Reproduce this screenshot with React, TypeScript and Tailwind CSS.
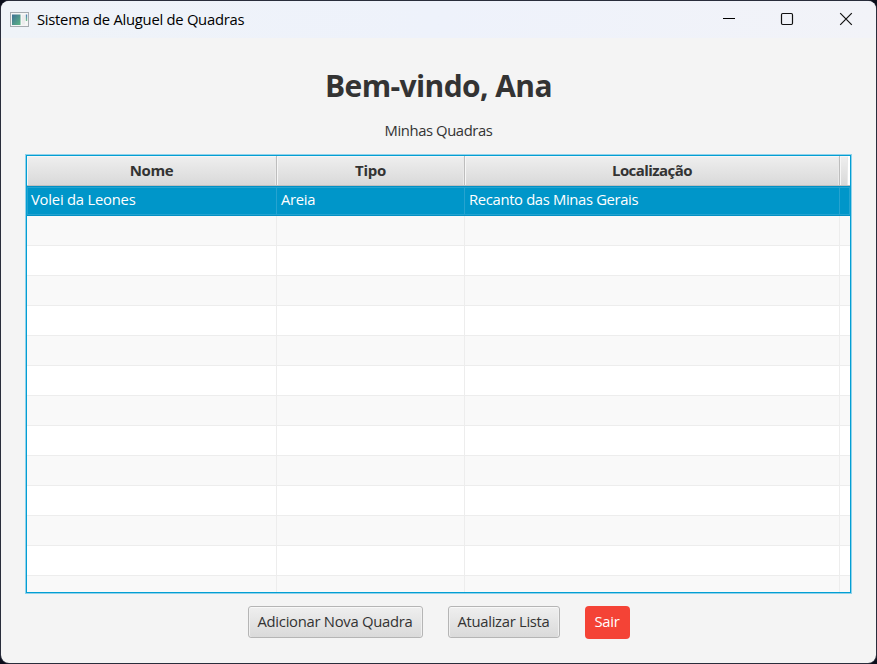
import React from "react";

const columns = [
  { title: "Nome", value: "Volei da Leones", width: "w-[250px]", head: "tracking-[-0.4px]", cell: "tracking-[-0.22px]" },
  { title: "Tipo", value: "Areia", width: "w-[188px]", head: "tracking-[-0.25px]", cell: "tracking-[-0.3px]" },
  { title: "Localização", value: "Recanto das Minas Gerais", width: "w-[375px]", head: "tracking-[-0.55px]", cell: "tracking-[-0.34px]" },
];

const emptyRows = Array.from({ length: 13 }, (_, i) => i);

function AppIcon() {
  return (
    <svg width="20" height="16" viewBox="0 0 20 16" className="shrink-0">
      <defs>
        <linearGradient id="pane" x1="0" y1="0" x2="1" y2="1">
          <stop offset="0" stopColor="#3f7095" />
          <stop offset="1" stopColor="#5cb584" />
        </linearGradient>
        <linearGradient id="side" x1="0" y1="0" x2="0" y2="1">
          <stop offset="0" stopColor="#4b78b8" />
          <stop offset="1" stopColor="#76c58d" />
        </linearGradient>
      </defs>
      <rect x="1.5" y="0.5" width="18" height="14" fill="#f5f6f6" stroke="#a6abb0" />
      <rect x="3" y="2.5" width="8.5" height="10.5" fill="url(#pane)" />
      <rect x="13" y="3" width="3" height="9.5" fill="#ececec" />
      <rect x="16.8" y="2.5" width="1.4" height="6.5" fill="url(#side)" />
    </svg>
  );
}

function TitleBar() {
  return (
    <header className="flex h-[37px] shrink-0 items-center bg-linear-to-r from-[#eff3f8] via-[#eef2fb] to-[#f2f3f8] pl-[8px]">
      <AppIcon />
      <h1 className="ml-[8px] text-[14.8px] tracking-[-0.27px] text-black">Sistema de Aluguel de Quadras</h1>
      <div className="mb-[2px] ml-auto flex items-center pr-[23px]">
        <svg width="12" height="14" viewBox="0 0 12 14" stroke="#000" fill="none">
          <path d="M0 6.5H12" />
        </svg>
        <svg width="14" height="14" viewBox="0 0 14 14" stroke="#111" strokeWidth="1.2" fill="none" className="ml-[45px]">
          <rect x="1.5" y="1.5" width="11" height="11" rx="1.2" />
        </svg>
        <svg width="14" height="14" viewBox="0 0 14 14" stroke="#111" strokeWidth="1.2" fill="none" className="ml-[45px]">
          <path d="M1.2 1.2L12.8 12.8M12.8 1.2L1.2 12.8" />
        </svg>
      </div>
    </header>
  );
}

function CourtTable() {
  return (
    <div className="h-[440px] w-[827px] shrink-0 border border-[#90d2ea]">
      <div className="h-full overflow-hidden border border-[#039ed3] bg-white">
        <div className="flex h-[30px] border-b border-[#c0c0c0] pr-[2px] font-bold">
          {columns.map((c) => (
            <div key={c.title} className={`${c.width} flex items-center justify-center border-r border-[#bdbdbd] bg-linear-to-b from-[#efefef] to-[#d9d9d9] text-[15px] shadow-[inset_1px_1px_0_#f6f6f6,inset_-1px_0_0_#e9e9e9] ${c.head}`}>
              {c.title}
            </div>
          ))}
          <div className="flex-1 bg-linear-to-b from-[#efefef] to-[#d9d9d9] shadow-[inset_1px_1px_0_#f6f6f6,inset_-1px_0_0_#e9e9e9]" />
        </div>
        <div className="flex h-[30px] border-y border-[#0391c5] bg-[#0096c9] text-white shadow-[inset_1px_1px_0_#24a3d0,inset_-1px_-1px_0_#24a3d0]">
          {columns.map((c) => (
            <div key={c.title} className={`${c.width} flex items-center border-r border-[#26a3d0] pb-[3px] pl-[4px] text-[14.8px] ${c.cell}`}>
              {c.value}
            </div>
          ))}
        </div>
        {emptyRows.map((i) => (
          <div key={i} className={i % 2 === 0 ? "flex h-[30px] border-b border-[#ededed] bg-[#f9f9f9]" : "flex h-[30px] border-b border-[#ededed] bg-white"}>
            {columns.map((c) => (
              <div key={c.title} className={`${c.width} border-r border-[#ededed]`} />
            ))}
          </div>
        ))}
      </div>
    </div>
  );
}

export default function App() {
  return (
    <div className="h-[664px] w-[877px] overflow-hidden bg-[#0b0e1b] font-['Open_Sans','Noto_Sans',sans-serif] text-[#333]">
      <div className="h-full rounded-[9px] border border-[#292d3b]">
        <div className="flex h-full flex-col items-center overflow-hidden rounded-[8px] bg-[#f4f4f4]">
          <div className="w-full"><TitleBar /></div>
          <h2 className="mt-[28px] text-[30px] leading-[40px] font-bold tracking-[-0.6px]">Bem-vindo, Ana</h2>
          <p className="mt-[14px] mb-[14px] text-[14.8px] leading-[20px] tracking-[-0.4px]">Minhas Quadras</p>
          <CourtTable />
          <div className="mt-[12px] flex items-start gap-[25px] text-[14.8px]">
            <button className="h-[32px] w-[175px] rounded-[3px] border border-[#b5b5b5] bg-linear-to-b from-[#efefef] to-[#dadada] pb-[2px] tracking-[-0.27px] shadow-[inset_0_1px_0_#f8f8f8,inset_1px_0_0_#f0f0f0,inset_-1px_0_0_#f0f0f0]">Adicionar Nova Quadra</button>
            <button className="h-[32px] w-[112px] rounded-[3px] border border-[#b5b5b5] bg-linear-to-b from-[#efefef] to-[#dadada] pb-[2px] tracking-[-0.3px] shadow-[inset_0_1px_0_#f8f8f8,inset_1px_0_0_#f0f0f0,inset_-1px_0_0_#f0f0f0]">Atualizar Lista</button>
            <button className="h-[33px] w-[45px] rounded-[4px] bg-[#f44336] pb-[2px] tracking-[-0.25px] text-white">Sair</button>
          </div>
        </div>
      </div>
    </div>
  );
}
